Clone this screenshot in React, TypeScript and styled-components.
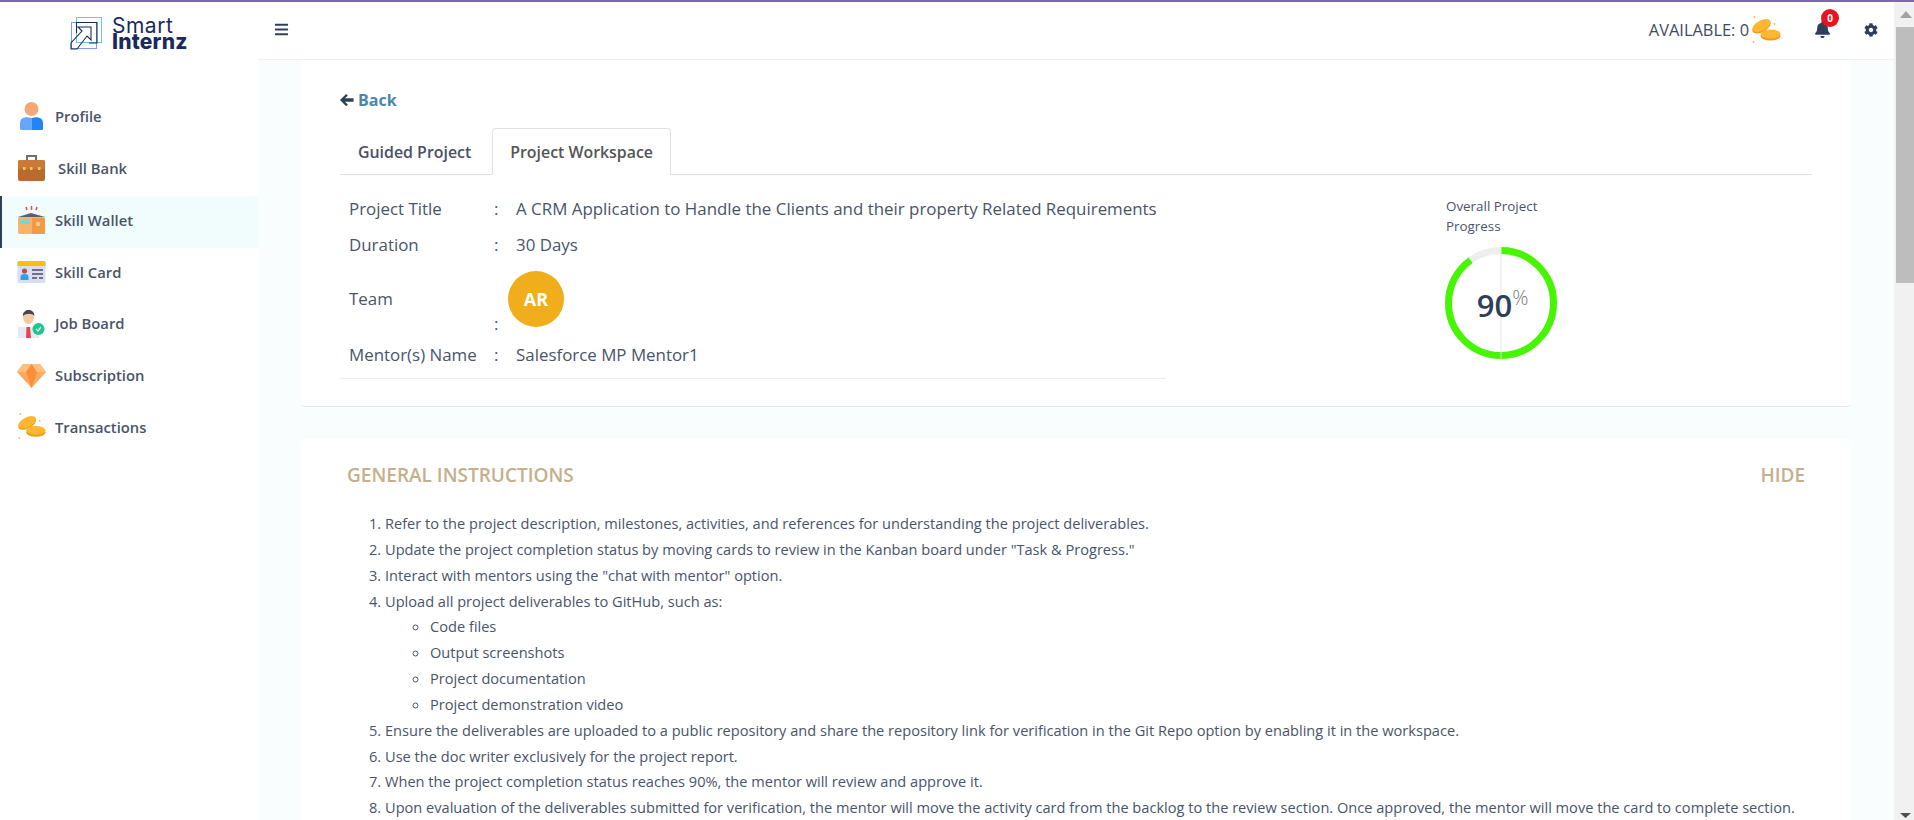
import { createGlobalStyle } from "styled-components";
import styled from "styled-components";
import { FaBars, FaBell, FaCog } from "react-icons/fa";

const GlobalStyle = createGlobalStyle`
  html, body {
    margin: 0;
    padding: 0;
    height: 820px;
    overflow: hidden;
    background: #fff;
    font-family: "Open Sans", "Liberation Sans", sans-serif;
    color: #4a5468;
  }
  * {
    box-sizing: border-box;
  }
`;

const Page = styled.div`
  height: 820px;
  border-top: 2px solid #7a68ae;
  display: flex;
  overflow: hidden;
`;

const Viewport = styled.div`
  flex: 1;
  min-width: 0;
  display: flex;
  overflow: hidden;
`;

const Sidebar = styled.aside`
  width: 258px;
  flex: none;
  background: #fff;
`;

const LogoBox = styled.div`
  height: 58px;
  display: flex;
  align-items: flex-start;
  padding: 14px 0 0 70px;
  gap: 8px;
`;

const LogoText = styled.div`
  font-family: "Inter", "Liberation Sans", sans-serif;
  color: #1b2a5c;
  line-height: 16px;
  padding-top: 2px;
`;

const LogoLight = styled.div`
  font-size: 21px;
  font-weight: 400;
  letter-spacing: 0.5px;
`;

const LogoBold = styled.div`
  font-size: 21px;
  font-weight: 800;
  letter-spacing: 0.2px;
`;

const Nav = styled.nav`
  margin-top: 30.5px;
  isolation: isolate;
`;

const NavItem = styled.div<{ $active?: boolean; $textGap?: number }>`
  position: relative;
  height: 51.75px;
  display: flex;
  align-items: center;
  padding-left: 17px;
  gap: ${(p) => p.$textGap ?? 9}px;
  font-size: 14.8px;
  font-weight: 600;
  color: #4a5468;
  ${(p) =>
    p.$active &&
    `
    &::before {
      content: "";
      position: absolute;
      inset: 2px 0 -2px 0;
      background: #f1fdfd;
      border-left: 2px solid #2e4057;
      z-index: -1;
    }
  `}
`;

const NavIcon = styled.svg`
  width: 29px;
  height: 30px;
  flex: none;
`;

const Main = styled.div`
  flex: 1;
  min-width: 0;
  display: flex;
  flex-direction: column;
  overflow: hidden;
`;

const Header = styled.header`
  height: 58px;
  flex: none;
  background: #fff;
  border-bottom: 1px solid #eef2f4;
  display: flex;
  align-items: center;
  padding: 0 16px 2px 16px;
  color: #2e4057;
`;

const Available = styled.div`
  margin-left: auto;
  font-size: 16.4px;
  color: #3f4b5f;
  display: flex;
  align-items: center;
  gap: 2px;
`;

const BellWrap = styled.div`
  position: relative;
  margin-left: 33px;
  display: flex;
  color: #2e4057;
`;

const Badge = styled.span`
  position: absolute;
  top: -12px;
  left: 7px;
  width: 18px;
  height: 18px;
  border-radius: 50%;
  background: #e8131f;
  color: #fff;
  font-size: 10px;
  font-weight: 700;
  display: flex;
  align-items: center;
  justify-content: center;
`;

const GearWrap = styled.div`
  margin-left: 33px;
  display: flex;
  color: #2e4057;
`;

const Content = styled.main`
  flex: 1;
  background: #f9fdfe;
  padding: 0 43px;
  overflow: hidden;
`;

const Card = styled.section`
  background: #fff;
  border-radius: 4px;
`;

const TopCard = styled(Card)`
  height: 347px;
  padding: 28px 39px 0;
  border-bottom: 1px solid #e3e8ec;
`;

const BackLink = styled.div`
  display: flex;
  align-items: center;
  gap: 4px;
  height: 24px;
  font-size: 16px;
  font-weight: 700;
  color: #4a86ad;
`;

const Tabs = styled.div`
  margin-top: 16px;
  display: flex;
  gap: 3px;
  border-bottom: 1px solid #dee2e6;
  height: 47px;
`;

const Tab = styled.div<{ $active?: boolean }>`
  height: 47px;
  display: flex;
  align-items: center;
  padding: 0 17px;
  font-size: 15.9px;
  font-weight: 550;
  border: 1px solid ${(p) => (p.$active ? "#dee2e6" : "transparent")};
  border-bottom: 1px solid ${(p) => (p.$active ? "#fff" : "transparent")};
  border-radius: 4px 4px 0 0;
  color: ${(p) => (p.$active ? "#555" : "#495067")};
  background: ${(p) => (p.$active ? "#fff" : "transparent")};
`;

const InfoRow = styled.div`
  display: flex;
  justify-content: space-between;
`;

const InfoTable = styled.div`
  width: 826px;
  border-bottom: 1px solid #eceff1;
  padding: 15px 0 5px;
  font-size: 16.9px;
  color: #4a5468;
`;

const Row = styled.div<{ $height: number }>`
  height: ${(p) => p.$height}px;
  display: grid;
  grid-template-columns: 145px 22px 1fr;
  padding-left: 9px;
  align-items: center;
`;

const Colon = styled.span<{ $low?: boolean }>`
  align-self: ${(p) => (p.$low ? "end" : "center")};
`;

const Avatar = styled.div`
  width: 56px;
  height: 56px;
  margin-left: -8px;
  border-radius: 50%;
  background: #f0ad1c;
  color: #fff;
  font-weight: 700;
  font-size: 18px;
  display: flex;
  align-items: center;
  justify-content: center;
`;

const Progress = styled.div`
  width: 366px;
  padding: 21px 0 0 0;
`;

const ProgressLabel = styled.div`
  width: 110px;
  font-size: 13.4px;
  line-height: 20px;
  color: #4a5468;
`;

const Ring = styled.div`
  position: relative;
  width: 112px;
  height: 112px;
  margin: 11px 0 0 -1px;
`;

const RingValue = styled.div`
  position: absolute;
  inset: 0;
  display: flex;
  align-items: center;
  justify-content: center;
  font-size: 31px;
  font-weight: 600;
  color: #2e4057;
  padding: 4px 0 0 3px;
`;

const Percent = styled.span`
  font-size: 20px;
  font-weight: 300;
  color: #777;
  align-self: flex-start;
  margin-top: 33px;
`;

const Instructions = styled(Card)`
  margin-top: 32px;
  padding: 21px 46px 0;
  height: 500px;
`;

const InstructionHead = styled.div`
  display: flex;
  justify-content: space-between;
  font-size: 19px;
  font-weight: 600;
  line-height: 30px;
  color: #c5b08d;
`;

const Steps = styled.ol`
  margin: 21px 0 0;
  padding-left: 38px;
  font-size: 14.6px;
  line-height: 25.85px;
  color: #4a5468;
`;

const SubSteps = styled.ul`
  list-style: circle;
  margin: 0;
  padding-left: 45px;
`;

const Scrollbar = styled.div`
  width: 20px;
  flex: none;
  background: #f1f1f1;
  display: flex;
  flex-direction: column;
  align-items: center;
`;

const ScrollArrow = styled.div<{ $end?: boolean }>`
  height: 25px;
  flex: none;
  display: flex;
  align-items: ${(p) => (p.$end ? "flex-end" : "center")};
  justify-content: center;
  padding-left: 3px;
  padding-bottom: ${(p) => (p.$end ? "2px" : "0")};
`;

const ScrollThumb = styled.div`
  width: 18px;
  height: 256px;
  align-self: flex-end;
  background: #bdbdbd;
`;

const ScrollSpace = styled.div`
  flex: 1;
`;

function ProfileIcon() {
  return (
    <NavIcon viewBox="0 0 29 30">
      <circle cx="14.5" cy="8" r="7" fill="#f4a877" />
      <path d="M3 28 V22 C3 17 8 15 14.5 17 V29 H5 Q3 29 3 28Z" fill="#65a6fb" />
      <path d="M26 28 V22 C26 17 21 15 14.5 17 V29 H24 Q26 29 26 28Z" fill="#2085fb" />
    </NavIcon>
  );
}

function BriefcaseIcon() {
  return (
    <NavIcon viewBox="0 0 29 30">
      <path d="M10 7 V3 H19 V7" fill="none" stroke="#6b6f7a" strokeWidth="2" />
      <rect x="1" y="7" width="27" height="21" rx="2" fill="#b96a2e" />
      <rect x="1" y="7" width="27" height="9" rx="2" fill="#cb7a35" />
      <rect x="6" y="14" width="2.5" height="3" fill="#f5c451" />
      <rect x="13" y="14" width="2.5" height="3" fill="#f5c451" />
      <rect x="21" y="14" width="2.5" height="3" fill="#f5c451" />
    </NavIcon>
  );
}

function WalletIcon() {
  return (
    <NavIcon viewBox="0 0 29 30">
      <path d="M9 2 l1 3 M14.5 1 v4 M20 2 l-1 3" stroke="#e5484d" strokeWidth="1.5" />
      <path d="M1 12 L14 8 L28 12 L14 16Z" fill="#5b5e70" />
      <rect x="1" y="12" width="27" height="17" rx="2" fill="#f8b26a" />
      <rect x="15" y="13" width="13" height="16" rx="1" fill="#f39a45" />
      <rect x="3" y="15" width="10" height="4" fill="#7fd3c8" />
      <rect x="19" y="17" width="4" height="4" fill="#f8c78c" />
    </NavIcon>
  );
}

function CardIcon() {
  return (
    <NavIcon viewBox="0 0 29 30">
      <rect x="0.5" y="4" width="28" height="22" rx="1.5" fill="#dcdcf0" />
      <path d="M0.5 9 V5.5 Q0.5 4 2 4 H27 Q28.5 4 28.5 5.5 V9Z" fill="#fbbd18" />
      <circle cx="7.5" cy="14" r="2.6" fill="#b5533c" />
      <path d="M3.5 23 V20 Q3.5 17 7.5 17 Q11.5 17 11.5 20 V23Z" fill="#2aa3ef" />
      <path d="M15 13 H26 M15 17 H26 M15 21 H20 M22 21 H26" stroke="#4a4f63" strokeWidth="1.6" />
    </NavIcon>
  );
}

function JobIcon() {
  return (
    <NavIcon viewBox="0 0 29 30">
      <rect x="1" y="19" width="21" height="11" fill="#e6e8f2" />
      <path d="M9.5 19 H13 L14 30 H9Z" fill="#e5484d" />
      <ellipse cx="11.5" cy="9" rx="5.5" ry="7" fill="#f7c9a0" />
      <path d="M6 8 C5 1 17 -1 17.5 8 C15 5 9 5 6 8Z" fill="#41484f" />
      <circle cx="21.5" cy="21" r="6" fill="#22c38e" />
      <path d="M19 21 l2 2 l3 -4" stroke="#d5f7ea" strokeWidth="1.3" fill="none" />
    </NavIcon>
  );
}

function DiamondIcon() {
  return (
    <NavIcon viewBox="0 0 29 30">
      <path d="M6 4 H23 L29 12 L14.5 28 L0 12Z" fill="#ffa95c" />
      <path d="M0 12 H29 L23 4 H6Z" fill="#ffc07f" />
      <path d="M9 12 L14.5 4 L20 12 L14.5 28Z" fill="#f89039" />
    </NavIcon>
  );
}

function CoinsIcon({ size = 29 }: { size?: number }) {
  return (
    <svg width={size} height={size} viewBox="0 0 29 30" style={{ flex: "none" }}>
      <ellipse cx="10" cy="12" rx="10" ry="5" transform="rotate(-28 10 12)" fill="#f09a1c" />
      <ellipse cx="10" cy="10.5" rx="10" ry="5" transform="rotate(-28 10 10.5)" fill="#fdb733" />
      <ellipse cx="19" cy="21" rx="10" ry="4.5" fill="#f09a1c" />
      <ellipse cx="19" cy="19" rx="10" ry="4.5" fill="#fdb733" />
      <circle cx="3" cy="2" r="0.9" fill="#f5b04a" />
      <circle cx="2" cy="27" r="0.9" fill="#f5b04a" />
      <circle cx="23" cy="9" r="0.9" fill="#f5b04a" />
    </svg>
  );
}

function LogoMark() {
  return (
    <svg width="34" height="34" viewBox="0 0 34 34" style={{ flex: "none" }}>
      <rect x="6.5" y="1.5" width="25" height="25" fill="none" stroke="#5fd0e4" strokeWidth="1" />
      <rect x="1.5" y="6.5" width="25" height="26" fill="none" stroke="#7f9cf0" strokeWidth="1" />
      <path
        d="M6.5 17 V6.5 H27 V27 H19 M1 33 V27 L12 15 L8 11 H21 V24 L17 20 L7 33Z"
        fill="none"
        stroke="#1b2a5c"
        strokeWidth="1.1"
      />
    </svg>
  );
}

function BackArrow() {
  return (
    <svg width="14" height="14" viewBox="0 0 16 16" style={{ flex: "none" }}>
      <path d="M7 1 L0 8 L7 15 L9 13 L5.5 10 H15.5 V6 H5.5 L9 3Z" fill="#2e4057" />
    </svg>
  );
}

function ProgressRing({ value }: { value: number }) {
  const r = 52.5;
  const c = 2 * Math.PI * r;
  return (
    <svg width="112" height="112" viewBox="0 0 112 112">
      <circle cx="56" cy="56" r={r} fill="none" stroke="#eeeeee" strokeWidth="7" />
      <circle
        cx="56"
        cy="56"
        r={r}
        fill="none"
        stroke="#46f600"
        strokeWidth="7"
        strokeDasharray={`${(c * value) / 100} ${c}`}
        transform="rotate(-90 56 56)"
      />
      <path d="M56 0 V112" stroke="#e4e6e4" strokeWidth="1" />
    </svg>
  );
}

const navItems = [
  { label: "Profile", icon: <ProfileIcon /> },
  { label: "Skill Bank", icon: <BriefcaseIcon />, textGap: 12 },
  { label: "Skill Wallet", icon: <WalletIcon />, active: true },
  { label: "Skill Card", icon: <CardIcon /> },
  { label: "Job Board", icon: <JobIcon /> },
  { label: "Subscription", icon: <DiamondIcon /> },
  { label: "Transactions", icon: <CoinsIcon /> },
];

export default function App() {
  return (
    <>
      <GlobalStyle />
      <Page>
        <Viewport>
          <Sidebar>
            <LogoBox>
              <LogoMark />
              <LogoText>
                <LogoLight>Smart</LogoLight>
                <LogoBold>Internz</LogoBold>
              </LogoText>
            </LogoBox>
            <Nav>
              {navItems.map((item) => (
                <NavItem key={item.label} $active={item.active} $textGap={item.textGap}>
                  {item.icon}
                  {item.label}
                </NavItem>
              ))}
            </Nav>
          </Sidebar>
          <Main>
            <Header>
              <FaBars size={15} />
              <Available>
                AVAILABLE: 0
                <CoinsIcon size={30} />
              </Available>
              <BellWrap>
                <FaBell size={17} />
                <Badge>0</Badge>
              </BellWrap>
              <GearWrap>
                <FaCog size={14} />
              </GearWrap>
            </Header>
            <Content>
              <TopCard>
                <BackLink>
                  <BackArrow />
                  Back
                </BackLink>
                <Tabs>
                  <Tab>Guided Project</Tab>
                  <Tab $active>Project Workspace</Tab>
                </Tabs>
                <InfoRow>
                  <InfoTable>
                    <Row $height={36}>
                      <span>Project Title</span>
                      <Colon>:</Colon>
                      <span>A CRM Application to Handle the Clients and their property Related Requirements</span>
                    </Row>
                    <Row $height={36}>
                      <span>Duration</span>
                      <Colon>:</Colon>
                      <span>30 Days</span>
                    </Row>
                    <Row $height={73}>
                      <span>Team</span>
                      <Colon $low>:</Colon>
                      <Avatar>AR</Avatar>
                    </Row>
                    <Row $height={38}>
                      <span>Mentor(s) Name</span>
                      <Colon>:</Colon>
                      <span>Salesforce MP Mentor1</span>
                    </Row>
                  </InfoTable>
                  <Progress>
                    <ProgressLabel>Overall Project Progress</ProgressLabel>
                    <Ring>
                      <ProgressRing value={90} />
                      <RingValue>
                        90<Percent>%</Percent>
                      </RingValue>
                    </Ring>
                  </Progress>
                </InfoRow>
              </TopCard>
              <Instructions>
                <InstructionHead>
                  <span>GENERAL INSTRUCTIONS</span>
                  <span>HIDE</span>
                </InstructionHead>
                <Steps>
                  <li>Refer to the project description, milestones, activities, and references for understanding the project deliverables.</li>
                  <li>Update the project completion status by moving cards to review in the Kanban board under "Task &amp; Progress."</li>
                  <li>Interact with mentors using the "chat with mentor" option.</li>
                  <li>
                    Upload all project deliverables to GitHub, such as:
                    <SubSteps>
                      <li>Code files</li>
                      <li>Output screenshots</li>
                      <li>Project documentation</li>
                      <li>Project demonstration video</li>
                    </SubSteps>
                  </li>
                  <li>Ensure the deliverables are uploaded to a public repository and share the repository link for verification in the Git Repo option by enabling it in the workspace.</li>
                  <li>Use the doc writer exclusively for the project report.</li>
                  <li>When the project completion status reaches 90%, the mentor will review and approve it.</li>
                  <li>Upon evaluation of the deliverables submitted for verification, the mentor will move the activity card from the backlog to the review section. Once approved, the mentor will move the card to complete section.</li>
                </Steps>
              </Instructions>
            </Content>
          </Main>
        </Viewport>
        <Scrollbar>
          <ScrollArrow>
            <svg width="12" height="7" viewBox="0 0 12 7">
              <path d="M6 0 L12 7 H0Z" fill="#a3a3a3" />
            </svg>
          </ScrollArrow>
          <ScrollThumb />
          <ScrollSpace />
          <ScrollArrow $end>
            <svg width="11" height="5" viewBox="0 0 11 5">
              <path d="M0 0 H11 L5.5 5Z" fill="#505050" />
            </svg>
          </ScrollArrow>
        </Scrollbar>
      </Page>
    </>
  );
}
